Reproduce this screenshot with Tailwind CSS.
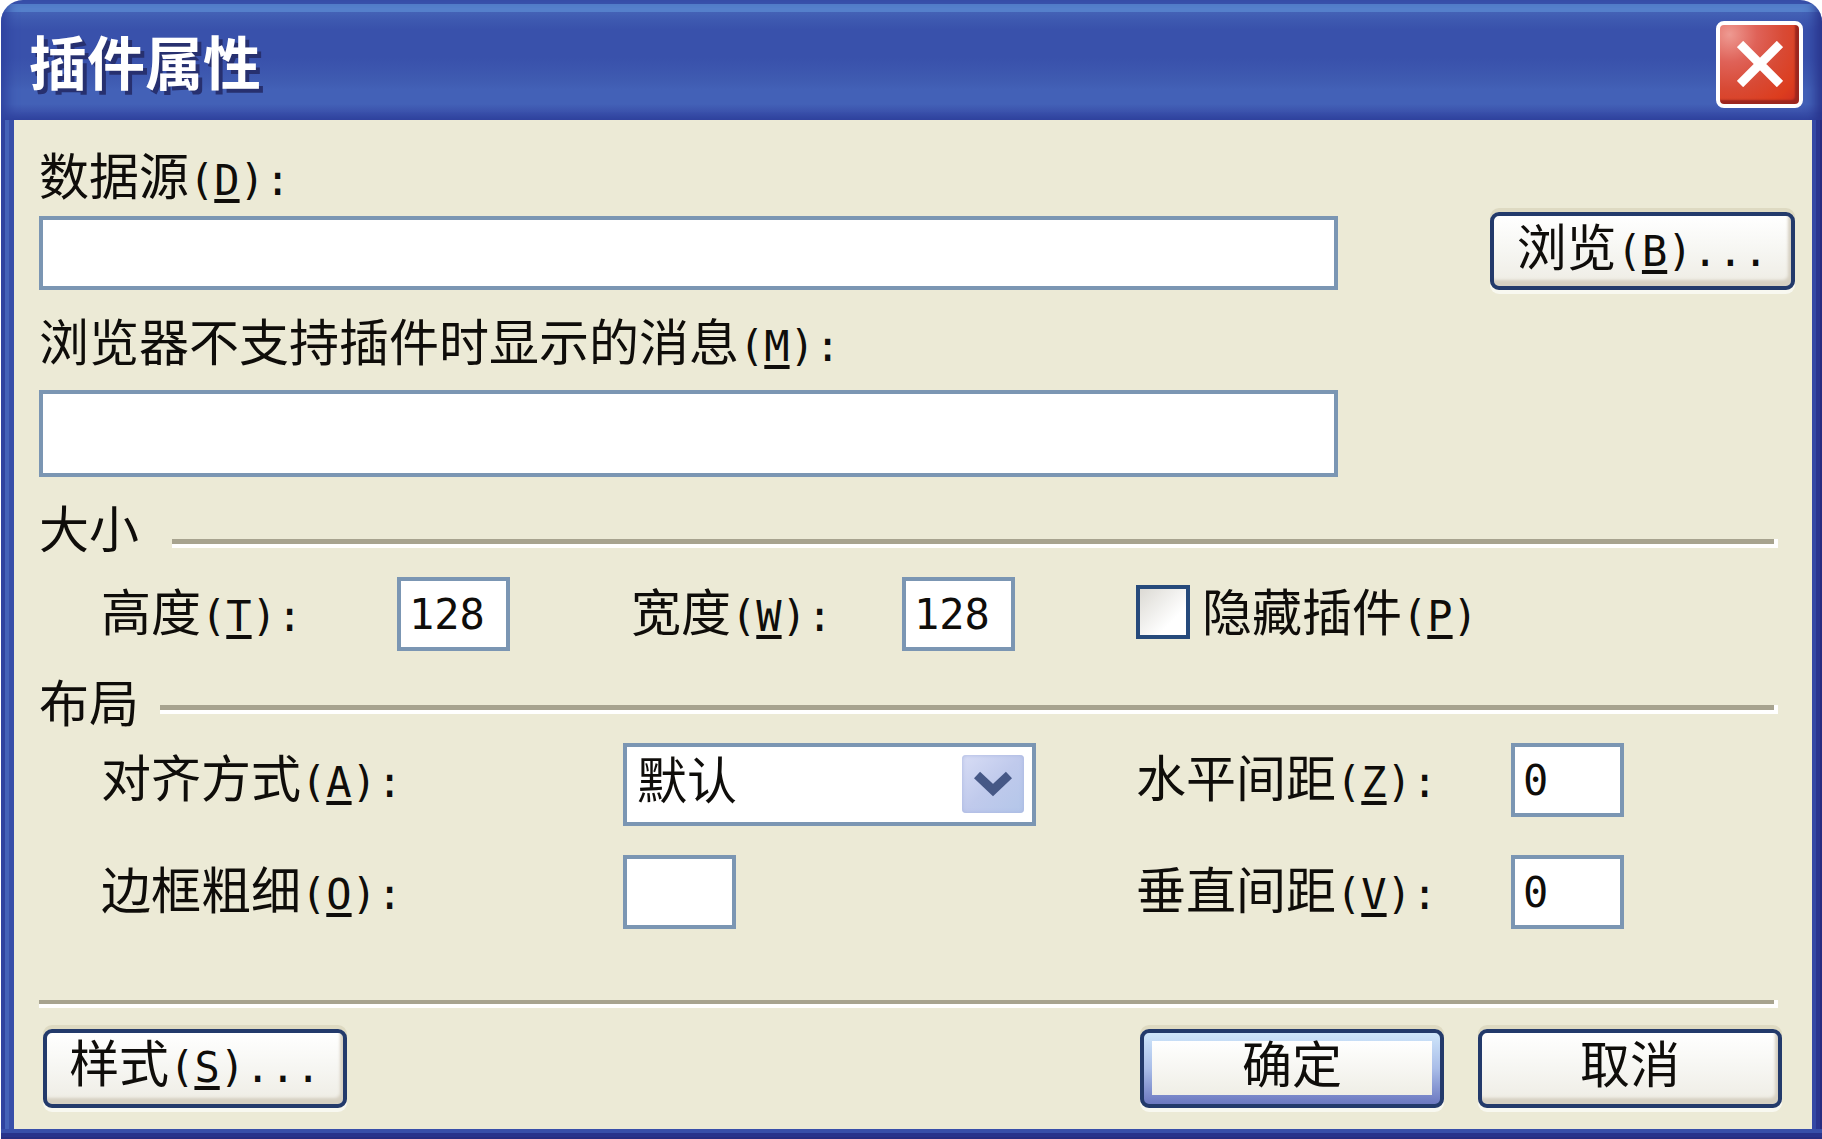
<!DOCTYPE html>
<html lang="zh-CN">

<head>
  <meta charset="UTF-8" />
  <meta name="viewport" content="width=device-width, initial-scale=1.0" />
  <title>插件属性</title>
  <script src="https://cdn.jsdelivr.net/npm/@tailwindcss/browser@4"></script>
</head>

<body class="bg-white pl-px font-['Noto_Sans_CJK_SC',sans-serif] text-[50px] leading-[54px] text-[#0f0d0a]">

  <div class="flex min-h-screen flex-col overflow-hidden rounded-t-[22px]">

    <!-- Title bar -->
    <header class="flex h-[120px] items-center justify-between bg-[linear-gradient(to_bottom,#3a54ad_0,#3a54ad_4px,#5580cb_4px,#5580cb_12px,#4462b6_12px,#3e59b0_20px,#3951ab_30px,#3951ab_58px,#3f5bb1_80px,#4361b7_90px,#4361b7_104px,#3b52ab_112px,#3145a0_120px)] pr-[19px] pl-7 shadow-[inset_12px_0_12px_-6px_#2f43a0,inset_-12px_0_12px_-6px_#28338b]">
      <h1 class="text-[58px] leading-[64px] font-bold text-white [text-shadow:4px_4px_0_#27306f]">插件属性</h1>
      <button type="button" aria-label="关闭" class="mt-2 flex size-[87px] items-center justify-center rounded-[8px] border-4 border-white bg-[radial-gradient(circle_at_12%_12%,#ee9a92_0,#df6258_28%,#d84a35_55%,#dc3d1e_80%,#cf2c22_100%)] shadow-[inset_-4px_-4px_2px_#9c261f]">
        <svg class="size-[46px]" viewBox="0 0 46 46" fill="none" stroke="#fff" stroke-width="9">
          <path d="M3 3L43 43M43 3L3 43" />
        </svg>
      </button>
    </header>

    <!-- Window frame -->
    <div class="flex grow flex-col bg-[linear-gradient(to_top,#272d80_2px,#28338b_2px,#28338b_6px,#384fa9_6px)] pb-[10px]">
      <div class="flex grow bg-[linear-gradient(to_right,#2f43a0_4px,#4462b8_4px,#4462b8_8px,#384fa9_8px,#384fa9_50%,#3448a5_50%,#3448a5_calc(100%-6px),#2a3590_calc(100%-6px),#2a3590_calc(100%-2px),#272c80_calc(100%-2px))] pr-[10px] pl-[13px]">
        <form class="flex grow flex-col bg-[#ecead6] pt-[26px] pr-[17px] pb-[21px] pl-[25px]">

          <!-- Source -->
          <label for="source" class="self-start">数据源<span class="font-['DejaVu_Sans_Mono',monospace] text-[42px] leading-none">(<u class="decoration-4 underline-offset-4">D</u>):</span></label>
          <div class="mt-[14px] flex items-start justify-between">
            <input id="source" type="text" class="h-[74px] w-[74%] border-4 border-[#7b96b3] bg-white px-3" />
            <button type="button" class="-mt-1 h-[78px] w-[305px] rounded-[9px] border-4 border-[#233a6b] bg-linear-to-b from-white via-[#f6f6f2] to-[#eeece4] pb-3 shadow-[inset_-3px_-6px_3px_#d6d0c2,0_4px_0_#f8f8f0,0_-4px_0_#dedac2]">浏览<span class="font-['DejaVu_Sans_Mono',monospace] text-[42px] leading-none">(<u class="decoration-4 underline-offset-4">B</u>)...</span></button>
          </div>

          <!-- Message -->
          <label for="message" class="mt-[22px] self-start">浏览器不支持插件时显示的消息<span class="font-['DejaVu_Sans_Mono',monospace] text-[42px] leading-none">(<u class="decoration-4 underline-offset-4">M</u>):</span></label>
          <input id="message" type="text" class="mt-[22px] h-[87px] w-[74%] border-4 border-[#7b96b3] bg-white px-3" />

          <!-- Size -->
          <div class="mt-[22px] flex items-start gap-[33px] pr-[17px]">
            <h2>大小</h2>
            <div class="mt-10 h-[9px] grow border-r-4 border-b-4 border-white bg-[#a7a38f]"></div>
          </div>
          <div class="mt-6 grid grid-cols-[296fr_234fr_271fr_234fr_642fr] items-start pr-[17px] pl-[62px] leading-[64px]">
            <label for="height">高度<span class="font-['DejaVu_Sans_Mono',monospace] text-[42px] leading-none">(<u class="decoration-4 underline-offset-4">T</u>):</span></label>
            <input id="height" type="text" value="128" class="h-[74px] w-[113px] border-4 border-[#7b96b3] bg-white pl-2 font-['DejaVu_Sans_Mono',monospace] text-[42px]" />
            <label for="width">宽度<span class="font-['DejaVu_Sans_Mono',monospace] text-[42px] leading-none">(<u class="decoration-4 underline-offset-4">W</u>):</span></label>
            <input id="width" type="text" value="128" class="h-[74px] w-[113px] border-4 border-[#7b96b3] bg-white pl-2 font-['DejaVu_Sans_Mono',monospace] text-[42px]" />
            <div class="flex items-start gap-3">
              <input id="hide" type="checkbox" class="mt-2 size-[54px] appearance-none border-4 border-[#264a7b] bg-linear-to-br from-[#dcdad4] to-white to-70%" />
              <label for="hide">隐藏插件<span class="font-['DejaVu_Sans_Mono',monospace] text-[42px] leading-none">(<u class="decoration-4 underline-offset-4">P</u>)</span></label>
            </div>
          </div>

          <!-- Layout -->
          <div class="mt-[22px] flex items-start gap-[21px] pr-[17px]">
            <h2>布局</h2>
            <div class="mt-8 h-[9px] grow border-r-4 border-b-4 border-white bg-[#a7a38f]"></div>
          </div>
          <div class="mt-4 grid grid-cols-[522fr_513fr_375fr_267fr] items-start gap-y-[29px] pr-[17px] pl-[62px] leading-[64px]">
            <label for="align">对齐方式<span class="font-['DejaVu_Sans_Mono',monospace] text-[42px] leading-none">(<u class="decoration-4 underline-offset-4">A</u>):</span></label>
            <div class="relative h-[83px] w-[413px]">
              <select id="align" class="h-[83px] w-full appearance-none border-4 border-[#7b96b3] bg-white pb-4 pl-[10px] leading-[60px]">
                <option>默认</option>
              </select>
              <span class="pointer-events-none absolute top-3 right-3 flex h-[58px] w-[62px] items-center justify-center rounded-[4px] bg-linear-to-br from-[#d8ddf5] via-[#c0caec] to-[#b3c6e9] shadow-[inset_0_0_4px_#a9b5df]">
                <svg class="h-[26px] w-[38px]" viewBox="0 0 38 26" fill="none" stroke="#465886" stroke-width="9">
                  <path d="M3 4L19 19L35 4" />
                </svg>
              </span>
            </div>
            <label for="hspace">水平间距<span class="font-['DejaVu_Sans_Mono',monospace] text-[42px] leading-none">(<u class="decoration-4 underline-offset-4">Z</u>):</span></label>
            <input id="hspace" type="text" value="0" class="h-[74px] w-[113px] border-4 border-[#7b96b3] bg-white pl-2 font-['DejaVu_Sans_Mono',monospace] text-[42px]" />

            <label for="border">边框粗细<span class="font-['DejaVu_Sans_Mono',monospace] text-[42px] leading-none">(<u class="decoration-4 underline-offset-4">O</u>):</span></label>
            <input id="border" type="text" class="h-[74px] w-[113px] border-4 border-[#7b96b3] bg-white pl-2 font-['DejaVu_Sans_Mono',monospace] text-[42px]" />
            <label for="vspace">垂直间距<span class="font-['DejaVu_Sans_Mono',monospace] text-[42px] leading-none">(<u class="decoration-4 underline-offset-4">V</u>):</span></label>
            <input id="vspace" type="text" value="0" class="h-[74px] w-[113px] border-4 border-[#7b96b3] bg-white pl-2 font-['DejaVu_Sans_Mono',monospace] text-[42px]" />
          </div>

          <!-- Buttons -->
          <div class="mt-auto mr-[17px] h-2 border-r-4 border-b-4 border-white bg-[#a7a38f]"></div>
          <div class="mt-[21px] flex items-center gap-[34px] pr-[13px] pl-1">
            <button type="button" class="mr-auto h-[79px] w-[304px] rounded-[9px] border-4 border-[#233a6b] bg-linear-to-b from-white via-[#f6f6f2] to-[#eeece4] pb-4 shadow-[inset_-3px_-6px_3px_#d6d0c2,0_4px_0_#f8f8f0,0_-4px_0_#dedac2]">样式<span class="font-['DejaVu_Sans_Mono',monospace] text-[42px] leading-none">(<u class="decoration-4 underline-offset-4">S</u>)...</span></button>
            <button type="submit" class="h-[79px] w-[304px] rounded-[9px] border-4 border-[#233a6b] bg-linear-to-b from-[#cfe6fa] via-[#a9bde8] to-[#6c78c0] px-2 pt-2 pb-[9px] shadow-[0_4px_0_#f8f8f0,0_-4px_0_#dedac2]">
              <span class="block h-[54px] bg-linear-to-b from-white to-[#efeee6] leading-[40px]">确定</span>
            </button>
            <button type="button" class="h-[79px] w-[304px] rounded-[9px] border-4 border-[#233a6b] bg-linear-to-b from-white via-[#f6f6f2] to-[#eeece4] pb-4 shadow-[inset_-3px_-6px_3px_#d6d0c2,0_4px_0_#f8f8f0,0_-4px_0_#dedac2]">取消</button>
          </div>
        </form>
      </div>
    </div>
  </div>

</body>

</html>
